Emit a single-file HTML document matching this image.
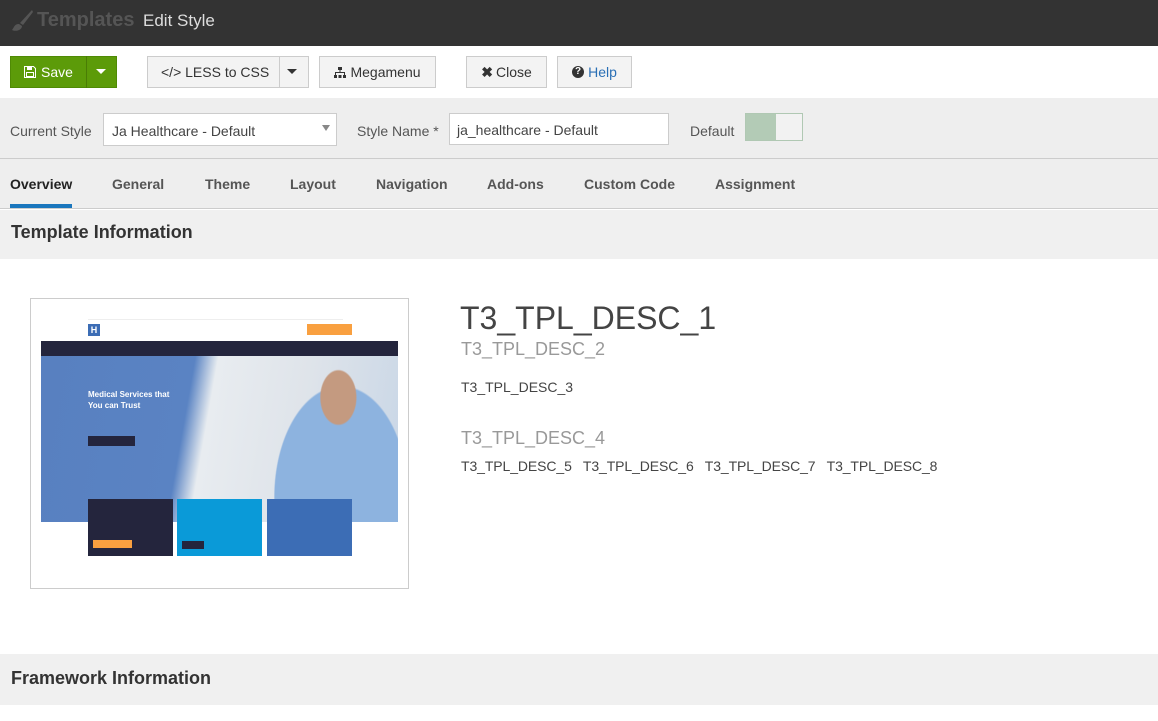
<!DOCTYPE html>
<html><head><meta charset="utf-8"><style>
*{box-sizing:border-box;margin:0;padding:0}
body{width:1158px;height:721px;overflow:hidden;font-family:"Liberation Sans",sans-serif;background:#fff;position:relative;color:#333}
.abs{position:absolute}
.hdr{left:0;top:0;width:1158px;height:46px;background:#333}
.btn{position:absolute;top:56px;height:32px;border:1px solid #ccc;background:#f3f3f3;font-size:14px;color:#333;display:flex;align-items:center;justify-content:center}
.tab{position:absolute;top:176px;font-size:14px;font-weight:bold;color:#555}
</style></head><body>
<div class="abs hdr"></div>
<svg class="abs" style="left:8px;top:9px" width="26" height="24" viewBox="0 0 26 24"><path d="M24 1 L12 14 L15 16 L25 3Z M11 15 C6 15 6 19 4 21 C8 23 14 21 14 17Z" fill="#555"/></svg>
<div class="abs" style="left:37px;top:9px;font-size:20px;font-weight:bold;color:#555">Templates</div>
<div class="abs" style="left:143px;top:11px;font-size:17px;color:#ddd">Edit Style</div>

<div class="abs" style="left:10px;top:56px;width:107px;height:32px;background:#5c9b09;border:1px solid #4f8a05"></div>
<div class="abs" style="left:86px;top:56px;width:1px;height:32px;background:#4a7d05"></div>
<svg class="abs" style="left:24px;top:66px" width="12" height="12" viewBox="0 0 12 12"><path d="M0.5 0.5H9.5L11.5 2.5V11.5H0.5Z" fill="none" stroke="#fff"/><rect x="3" y="1" width="5" height="3" fill="#fff"/><rect x="2.5" y="6.5" width="7" height="4" fill="none" stroke="#fff"/></svg>
<div class="abs" style="left:41px;top:64px;font-size:14px;color:#fff">Save</div>
<div class="abs" style="left:96px;top:69px;border-left:5px solid transparent;border-right:5px solid transparent;border-top:5px solid #fff"></div>

<div class="btn" style="left:147px;width:162px;justify-content:flex-start;padding-left:13px">&lt;/&gt; LESS to CSS</div>
<div class="abs" style="left:279px;top:56px;width:1px;height:32px;background:#ccc"></div>
<div class="abs" style="left:287px;top:69px;border-left:5px solid transparent;border-right:5px solid transparent;border-top:5px solid #333"></div>
<div class="btn" style="left:319px;width:117px">
<svg width="12" height="11" viewBox="0 0 12 11" style="margin-right:4px"><rect x="4" y="0" width="4" height="3" fill="#333"/><rect x="5.5" y="3" width="1" height="3" fill="#333"/><rect x="1" y="5" width="10" height="1" fill="#333"/><rect x="1" y="5" width="1" height="3" fill="#333"/><rect x="10" y="5" width="1" height="3" fill="#333"/><rect x="0" y="8" width="3" height="3" fill="#333"/><rect x="4.5" y="8" width="3" height="3" fill="#333"/><rect x="9" y="8" width="3" height="3" fill="#333"/></svg>Megamenu</div>
<div class="btn" style="left:466px;width:81px"><b style="margin-right:3px">✖</b>Close</div>
<div class="btn" style="left:557px;width:75px;color:#2a6fb5"><span style="display:inline-block;width:12px;height:12px;border-radius:6px;background:#333;color:#fff;font-size:10px;font-weight:bold;text-align:center;line-height:12px;margin-right:4px">?</span>Help</div>

<div class="abs" style="left:0;top:98px;width:1158px;height:61px;background:#eee;border-bottom:1px solid #ccc"></div>
<div class="abs" style="left:10px;top:123px;font-size:14px;color:#555">Current Style</div>
<div class="abs" style="left:103px;top:113px;width:234px;height:33px;background:#fff;border:1px solid #ccc;font-size:14px;padding:9px 8px;color:#444">Ja Healthcare - Default</div>
<div class="abs" style="left:322px;top:125px;border-left:4px solid transparent;border-right:4px solid transparent;border-top:6px solid #888"></div>
<div class="abs" style="left:357px;top:123px;font-size:14px;color:#555">Style Name *</div>
<div class="abs" style="left:449px;top:113px;width:220px;height:32px;background:#fff;border:1px solid #ccc;font-size:14px;padding:8px 7px;color:#444">ja_healthcare - Default</div>
<div class="abs" style="left:690px;top:123px;font-size:14px;color:#555">Default</div>
<div class="abs" style="left:745px;top:113px;width:58px;height:28px;border:1px solid #b0c8b3;background:#f2f2f2"></div>
<div class="abs" style="left:746px;top:114px;width:30px;height:26px;background:#b3cbb6"></div>

<div class="abs" style="left:0;top:159px;width:1158px;height:50px;background:#eee;border-bottom:1px solid #ccc"></div>
<div class="tab" style="left:10px;color:#222">Overview</div>
<div class="abs" style="left:10px;top:204px;width:62px;height:4px;background:#1a76bd"></div>
<div class="tab" style="left:112px">General</div>
<div class="tab" style="left:205px">Theme</div>
<div class="tab" style="left:290px">Layout</div>
<div class="tab" style="left:376px">Navigation</div>
<div class="tab" style="left:487px">Add-ons</div>
<div class="tab" style="left:584px">Custom Code</div>
<div class="tab" style="left:715px">Assignment</div>

<div class="abs" style="left:0;top:210px;width:1158px;height:49px;background:#f0f0f0"></div>
<div class="abs" style="left:11px;top:222px;font-size:18px;font-weight:bold;color:#333">Template Information</div>

<div class="abs" style="left:30px;top:298px;width:379px;height:291px;border:1px solid #ccc;background:#fff;overflow:hidden">
 <div class="abs" style="left:57px;top:20px;width:255px;height:1px;background:#eee"></div>
 <div class="abs" style="left:57px;top:25px;width:12px;height:12px;background:#3c6db5;color:#fff;font-size:9px;font-weight:bold;text-align:center;line-height:12px">H</div>
 <div class="abs" style="left:276px;top:25px;width:45px;height:11px;background:#f9a040"></div>
 <div class="abs" style="left:10px;top:42px;width:357px;height:15px;background:#24253d"></div>
 <div class="abs" style="left:10px;top:57px;width:357px;height:166px;background:linear-gradient(100deg,#5880c0 0%,#5a83c3 40%,#e8ecf0 46%,#dfe4ea 70%,#c8d6e6 100%)"></div>
 <div class="abs" style="left:225px;top:57px;width:142px;height:166px;background:radial-gradient(ellipse at 58% 25%,#c49a80 0 15%,transparent 16%),radial-gradient(ellipse at 60% 85%,#8db3df 0 55%,transparent 56%)"></div>
 <div class="abs" style="left:57px;top:90px;font-size:8px;font-weight:bold;color:#fff;line-height:11px">Medical Services that<br>You can Trust</div>
 <div class="abs" style="left:57px;top:137px;width:47px;height:10px;background:#24253d"></div>
 <div class="abs" style="left:57px;top:200px;width:85px;height:57px;background:#24253d"></div>
 <div class="abs" style="left:62px;top:241px;width:39px;height:8px;background:#f9a040"></div>
 <div class="abs" style="left:146px;top:200px;width:85px;height:57px;background:#0a9ad8"></div>
 <div class="abs" style="left:151px;top:242px;width:22px;height:8px;background:#24253d"></div>
 <div class="abs" style="left:236px;top:200px;width:85px;height:57px;background:#3c6db5"></div>
</div>

<div class="abs" style="left:460px;top:300px;font-size:32px;color:#444">T3_TPL_DESC_1</div>
<div class="abs" style="left:461px;top:339px;font-size:18px;color:#999">T3_TPL_DESC_2</div>
<div class="abs" style="left:461px;top:379px;font-size:14px;color:#444">T3_TPL_DESC_3</div>
<div class="abs" style="left:461px;top:428px;font-size:18px;color:#999">T3_TPL_DESC_4</div>
<div class="abs" style="left:461px;top:458px;font-size:14px;color:#444;letter-spacing:-0.1px">T3_TPL_DESC_5&nbsp;&nbsp; T3_TPL_DESC_6&nbsp;&nbsp; T3_TPL_DESC_7&nbsp;&nbsp; T3_TPL_DESC_8</div>

<div class="abs" style="left:0;top:654px;width:1158px;height:51px;background:#f0f0f0"></div>
<div class="abs" style="left:11px;top:668px;font-size:18px;font-weight:bold;color:#333">Framework Information</div>
</body></html>
